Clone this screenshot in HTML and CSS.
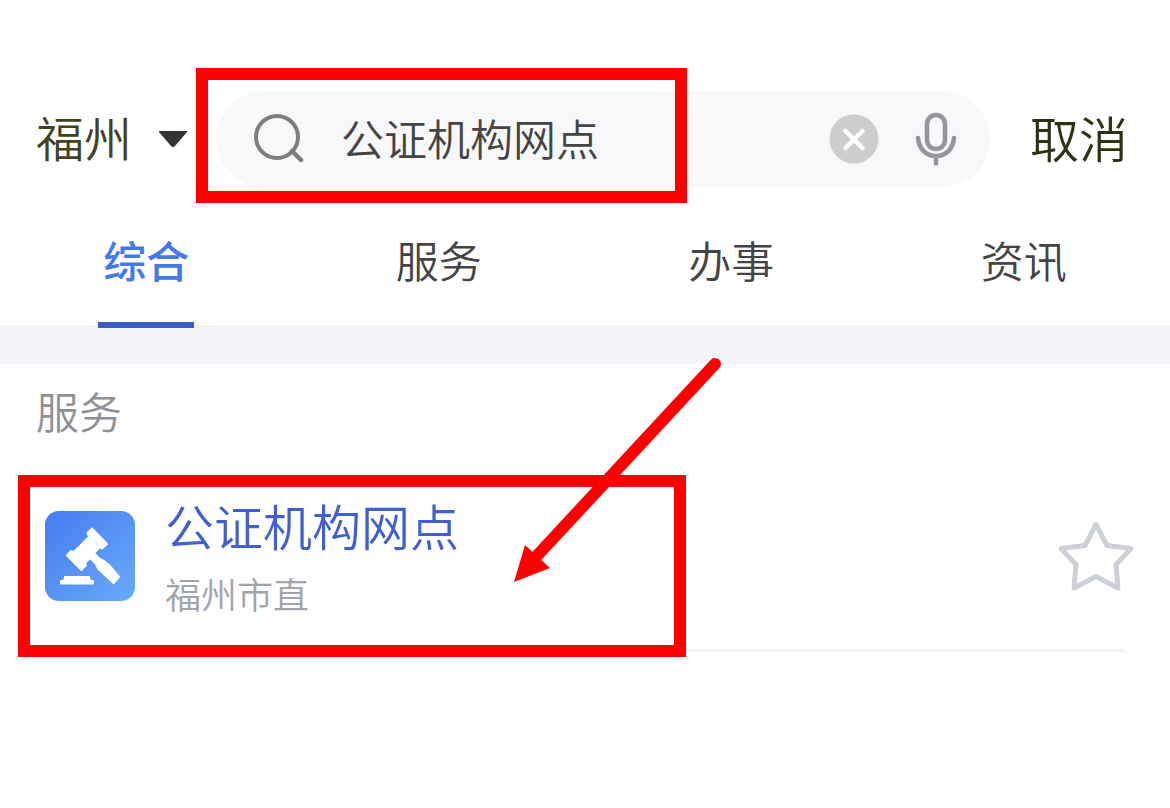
FILE: index.html
```html
<!DOCTYPE html>
<html lang="zh-CN">
<head>
  <meta charset="UTF-8">
  <meta name="viewport" content="width=device-width, initial-scale=1">
  <title>公证机构网点</title>
  <link rel="stylesheet" href="styles.css">
</head>
<body>
  <header class="header">
    <label class="city">
      <select class="city-select" aria-label="城市">
        <option>福州</option>
      </select>
      <svg class="city-arrow" width="28" height="16" viewBox="0 0 28 16"><path d="M0 0h28v1L16 15q-2 2-4 0L0 1z" fill="#333"/></svg>
    </label>
    <form class="search">
      <svg class="search-icon" width="52" height="52" viewBox="0 0 52 52" fill="none" stroke="#7b7d7f" stroke-width="4">
        <circle cx="25" cy="24" r="21"/>
        <path d="M40 38l9 9" stroke-width="4.500" stroke-linecap="round"/>
      </svg>
      <input class="search-input" type="text" value="公证机构网点" aria-label="搜索">
      <button class="icon-btn" type="reset" aria-label="清除">
        <svg width="50" height="50" viewBox="0 0 50 50">
          <circle cx="25" cy="25" r="24.500" fill="#cdcdcd"/>
          <path d="M16.500 17l17 17M33.500 17l-17 17" stroke="#fff" stroke-width="4.500" stroke-linecap="round"/>
        </svg>
      </button>
      <button class="icon-btn" type="button" aria-label="语音">
        <svg width="42" height="54" viewBox="0 0 42 54" fill="none" stroke="#94969c" stroke-width="4.500" stroke-linecap="round">
          <rect x="12" y="3" width="18" height="34" rx="9"/>
          <path d="M3 26c1 11 8 18 18 18s17-7 18-18M21 44v7.500"/>
        </svg>
      </button>
      <span class="mark mark-search"></span>
    </form>
    <button class="cancel" type="button">取消</button>
  </header>

  <nav class="tabs">
    <a class="tab active" href="#all">综合</a>
    <a class="tab" href="#service">服务</a>
    <a class="tab" href="#affairs">办事</a>
    <a class="tab" href="#news">资讯</a>
  </nav>

  <main class="results">
    <h2 class="section-title">服务</h2>
    <div class="item">
      <svg class="item-icon" width="90" height="90" viewBox="0 0 90 90">
        <defs>
          <linearGradient id="tile" x1="0" y1="0" x2="1" y2="1">
            <stop offset="0" stop-color="#467bf0"/>
            <stop offset="1" stop-color="#68abfa"/>
          </linearGradient>
        </defs>
        <rect width="90" height="90" rx="14" fill="url(#tile)"/>
        <g fill="#fff" stroke="#fff" stroke-width="2" stroke-linejoin="round">
          <path d="M47 17.500L62 33L57 37.500L55 36L49 42L54 47.500Q60 50 64 54L74 66L68.500 72L53 57.500L51 53L45 47L40 52L41 54L36.500 59L22 44.500L26 40L29 41L44 26L42.500 22z"/>
          <path d="M20 66h24l1 4h3v2.500H16V70h3z"/>
        </g>
        <path d="M44.500 24.500L54.500 35" stroke="#dde9fd"/>
      </svg>
      <div class="item-body">
        <a class="item-name" href="#item">公证机构网点</a>
        <p class="item-area">福州市直</p>
      </div>
      <button class="icon-btn" type="button" aria-label="收藏">
        <svg width="76" height="72" viewBox="0 0 76 72"><path d="M38 4.500L49 25.500L73 28.500L58 44.500L60 68L38 56.500L16 68L18 44.500L3 28.500L27 25.500z" fill="none" stroke="#cdd1d7" stroke-width="5" stroke-linejoin="round"/></svg>
      </button>
      <span class="mark mark-item"></span>
      <svg class="arrow" width="210" height="228" viewBox="0 0 210 228">
        <path d="M203 8L22 203" stroke="#f00" stroke-width="12" stroke-linecap="round"/>
        <path d="M2 226L13 189L38 212z" fill="#f00"/>
      </svg>
    </div>
  </main>
</body>
</html>
```

FILE: styles.css
```css
* {
  box-sizing: border-box;
}

body {
  margin: 0;
  min-height: 100vh;
  background: #fff;
  color: #444;
  font-family: "Noto Sans CJK SC", sans-serif;
  font-weight: 350;
}

button, input, select {
  font-family: inherit;
  font-weight: inherit;
  border: none;
  padding: 0;
  background: none;
}

svg {
  display: block;
}

.header {
  display: flex;
  align-items: center;
  padding: 91px 42px 0 36px;
}

.city {
  display: flex;
  align-items: center;
  gap: 26px;
  margin-right: 29px;
}

.city-select {
  appearance: none;
  padding-bottom: 6px;
  font-size: 48px;
  color: #43411f;
}

.search {
  position: relative;
  flex: 1;
  min-width: 0;
  display: flex;
  align-items: center;
  height: 96px;
  padding: 0 33px 0 36px;
  border-radius: 48px;
  background: #f8f8fb;
}

.search-input {
  flex: 1;
  min-width: 0;
  margin-left: 37px;
  padding-bottom: 4px;
  font-size: 43px;
  color: #444;
  outline: none;
}

.icon-btn {
  cursor: pointer;
}

.search .icon-btn + .icon-btn {
  margin-left: 36px;
}

.cancel {
  margin-left: 40px;
  padding-bottom: 6px;
  font-size: 49px;
  color: #2f3014;
  cursor: pointer;
}

.tabs {
  display: flex;
  padding-top: 37px;
  border-bottom: 3px solid #f2f2f2;
}

.tab {
  flex: 1;
  display: flex;
  flex-direction: column;
  align-items: center;
  height: 101px;
  font-size: 43px;
  line-height: 70px;
  color: #444;
  text-decoration: none;
}

.tab.active {
  color: #4479e8;
  font-weight: 500;
}

.tab.active::after {
  content: "";
  flex: none;
  width: 96px;
  height: 6px;
  margin-top: 28px;
  background: #3c5bcb;
}

.results {
  padding-bottom: 60px;
  border-top: 36px solid #f5f4fa;
}

.section-title {
  margin: 0;
  padding: 14px 36px 0;
  font-size: 43px;
  font-weight: inherit;
  line-height: 64px;
  color: #909196;
}

.item {
  position: relative;
  display: flex;
  align-items: center;
  margin: 45px 45px 0;
  padding-bottom: 24px;
  border-bottom: 3px solid #f3f3f3;
}

.item-icon {
  flex: none;
  margin-right: 30px;
}

.item-body {
  flex: 1;
  padding-bottom: 2px;
}

.item-name {
  display: block;
  font-size: 49px;
  line-height: 76px;
  color: #425fd0;
  text-decoration: none;
}

.item-area {
  margin: 0;
  font-size: 36px;
  line-height: 60px;
  color: #a1a4aa;
}

.item .icon-btn {
  margin-right: -9px;
}

/* red callouts */
.mark {
  position: absolute;
  border: 12px solid #f00;
  pointer-events: none;
}

.mark-search {
  top: -23px;
  left: -20px;
  width: 491px;
  height: 135px;
}

.mark-item {
  top: -12px;
  left: -27px;
  width: 668px;
  height: 182px;
}

.arrow {
  position: absolute;
  top: -131px;
  left: 467px;
  pointer-events: none;
}
```
